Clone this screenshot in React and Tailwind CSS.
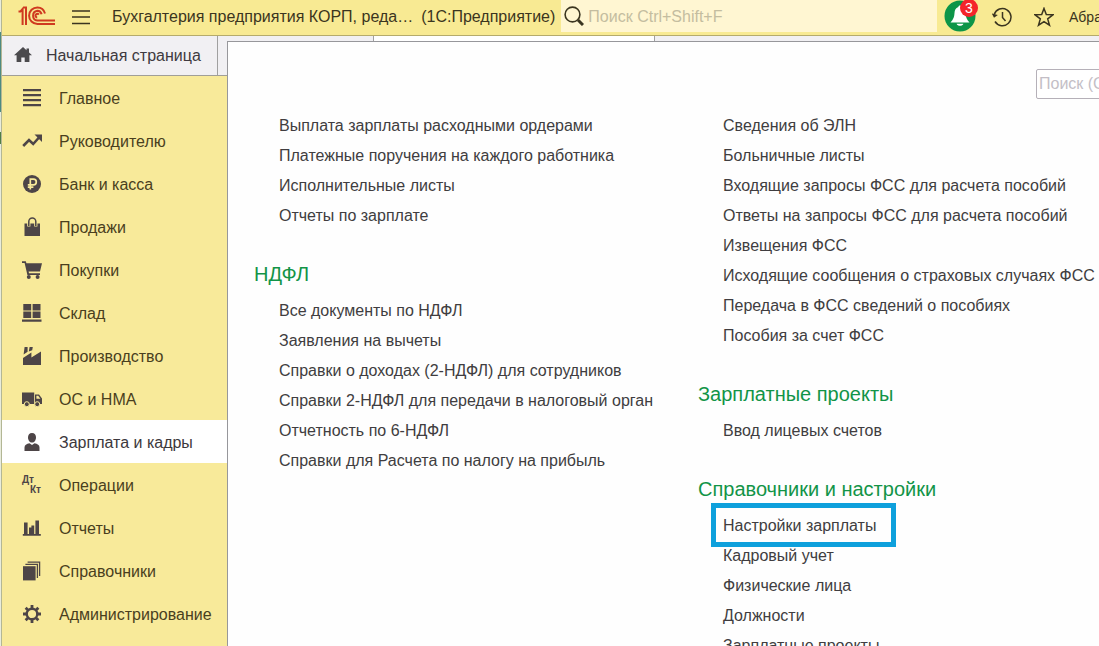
import React from 'react';

const Icon = ({ children, size = 20 }) => (
  <svg width={size} height={size} viewBox="0 0 20 20" fill="currentColor" aria-hidden="true">
    {children}
  </svg>
);

const icons = {
  main: (
    <Icon>
      <path d="M1 1h18v2.2H1zM1 6h18v2.2H1zM1 11h18v2.2H1zM1 16h18v2.2H1z" />
    </Icon>
  ),
  trend: (
    <Icon>
      <path d="M1.2 15 7 9l4.200 4L17 6.500" fill="none" stroke="currentColor" strokeWidth="2.600" />
      <path d="M12.500 3.500H20v7.500z" />
    </Icon>
  ),
  ruble: (
    <Icon>
      <circle cx="10" cy="10" r="9" />
      <path
        d="M8.300 15.500V5.200h3.200a2.700 2.700 0 0 1 0 5.600H5.800M5.800 13.200h5.600"
        fill="none"
        stroke="#f8ea9a"
        strokeWidth="1.700"
      />
    </Icon>
  ),
  bag: (
    <Icon>
      <path d="M2.500 6.500h15.500V19H2.500z" />
      <path d="M6.800 9.500V5a3.500 3.500 0 0 1 7 0v4.500" fill="none" stroke="#f8ea9a" strokeWidth="3.200" />
      <path d="M6.800 9V4.500a3.500 3.500 0 0 1 7 0V9" fill="none" stroke="currentColor" strokeWidth="1.500" />
    </Icon>
  ),
  cart: (
    <Icon>
      <path d="M0 1.200h3.800l.6 2H20l-2 8.300H6.600l.4 1.700h11v1.800H5.400L2.600 3H0z" />
      <circle cx="6.800" cy="17" r="2" />
      <circle cx="15.600" cy="17" r="2" />
    </Icon>
  ),
  stock: (
    <Icon>
      <path d="M1.300 1h7.900v6.400H1.300zM10.600 1h7.900v6.400h-7.900zM1.300 8.600h7.900V15H1.300zM10.600 8.600h7.900V15h-7.900zM0 16.400h19.500v2.400H0z" />
    </Icon>
  ),
  factory: (
    <Icon>
      <path d="M1 19V12l8.400-5.600v5L19 5.600V19z" />
      <path d="M2.600 1h3v4.800L1.600 8.600zM7.600 1h3.200l-.6 3.200-3.400 1.200z" />
    </Icon>
  ),
  truck: (
    <Icon>
      <path d="M0 3.500h12.200V15H0z" />
      <path d="M13 5.500h4l3 4V15h-7zM14.400 6.800v3h4l-2.200-3z" fillRule="evenodd" />
      <circle cx="4.800" cy="15.200" r="2.500" stroke="#f8ea9a" />
      <circle cx="15.200" cy="15.200" r="2.500" stroke="#f8ea9a" />
    </Icon>
  ),
  person: (
    <Icon>
      <path d="M10 1c2.700 0 4 2 4 4.500S12.400 10.600 10 10.600 6 8 6 5.500 7.300 1 10 1z" />
      <path d="M2.500 19v-3.600c0-2.400 2-3.600 5-4.200L10 13l2.500-1.800c3 .6 5 1.800 5 4.200V19z" />
    </Icon>
  ),
  debit: (
    <span className="relative block h-5 w-5 text-[10px] leading-[10px] font-bold">
      <span className="block text-left">Дт</span>
      <span className="block pl-2">Кт</span>
    </span>
  ),
  report: (
    <Icon>
      <path d="M2 4.500h3.600V16H2zM7 9.500h3.600V16H7zM9.400 7.500h2.800V16H9.400zM13.400 2.500H17V16h-3.600zM.8 16h18v1.800H.8z" />
    </Icon>
  ),
  books: (
    <Icon>
      <path d="M1 5.200h12.600V19.400H1z" />
      <path d="M3.400 3.400h12V17M5.600 1.200h12V15" fill="none" stroke="currentColor" strokeWidth="1.300" />
    </Icon>
  ),
  gear: (
    <Icon>
      <circle cx="10" cy="10" r="5.300" fill="none" stroke="currentColor" strokeWidth="2.400" />
      <path
        d="M10 1v3.200M10 15.800V19M1 10h3.200M15.800 10H19M3.640 3.640l2.300 2.300M14.060 14.060l2.300 2.300M3.640 16.360l2.300-2.300M14.060 5.940l2.300-2.300"
        stroke="currentColor"
        strokeWidth="2.800"
      />
    </Icon>
  ),
};

const sections = [
  { icon: 'main', label: 'Главное' },
  { icon: 'trend', label: 'Руководителю' },
  { icon: 'ruble', label: 'Банк и касса' },
  { icon: 'bag', label: 'Продажи' },
  { icon: 'cart', label: 'Покупки' },
  { icon: 'stock', label: 'Склад' },
  { icon: 'factory', label: 'Производство' },
  { icon: 'truck', label: 'ОС и НМА' },
  { icon: 'person', label: 'Зарплата и кадры', active: true },
  { icon: 'debit', label: 'Операции' },
  { icon: 'report', label: 'Отчеты' },
  { icon: 'books', label: 'Справочники' },
  { icon: 'gear', label: 'Администрирование' },
];

const leftGroups = [
  {
    items: [
      'Выплата зарплаты расходными ордерами',
      'Платежные поручения на каждого работника',
      'Исполнительные листы',
      'Отчеты по зарплате',
    ],
  },
  {
    title: 'НДФЛ',
    items: [
      'Все документы по НДФЛ',
      'Заявления на вычеты',
      'Справки о доходах (2-НДФЛ) для сотрудников',
      'Справки 2-НДФЛ для передачи в налоговый орган',
      'Отчетность по 6-НДФЛ',
      'Справки для Расчета по налогу на прибыль',
    ],
  },
];

const rightGroups = [
  {
    items: [
      'Сведения об ЭЛН',
      'Больничные листы',
      'Входящие запросы ФСС для расчета пособий',
      'Ответы на запросы ФСС для расчета пособий',
      'Извещения ФСС',
      'Исходящие сообщения о страховых случаях ФСС',
      'Передача в ФСС сведений о пособиях',
      'Пособия за счет ФСС',
    ],
  },
  { title: 'Зарплатные проекты', items: ['Ввод лицевых счетов'] },
  {
    title: 'Справочники и настройки',
    highlighted: 'Настройки зарплаты',
    items: [
      'Настройки зарплаты',
      'Кадровый учет',
      'Физические лица',
      'Должности',
      'Зарплатные проекты',
    ],
  },
];

const Logo = () => (
  <svg width="38" height="20" viewBox="0 0 38 20" fill="none" stroke="#cf3a20" strokeWidth="2" aria-label="1С">
    <path d="M.5 5.500h2L4.600 3V19M8 19V1.400H5.200" />
    <path d="M27 7.500C26 3.700 22.800 1.400 19.400 1.400a8.200 8.200 0 0 0 0 16.600H37" />
    <path d="M23.600 8.200c-.6-2.200-2.200-3.500-4.200-3.500a5 5 0 0 0 0 9.900H37" />
    <path d="M20.800 8.600a1.800 1.800 0 1 0-1.600 2.800" />
  </svg>
);

const Header = () => (
  <header className="flex h-9 shrink-0 items-center overflow-hidden border-b border-[#b5ab6c] bg-[#f8ea93] text-[#3b3520]">
    <a href="#" className="ml-4 shrink-0 pb-1">
      <Logo />
    </a>
    <button type="button" aria-label="Меню" className="ml-4 shrink-0 pb-0.5">
      <svg width="18" height="16" viewBox="0 0 18 16" stroke="currentColor" strokeWidth="1.400">
        <path d="M0 2h18M0 8h18M0 14.500h18" />
      </svg>
    </button>
    <h1 className="ml-[22px] flex shrink-0 gap-2 pb-0.5">
      <span>Бухгалтерия предприятия КОРП, реда…</span>
      <span>(1С:Предприятие)</span>
    </h1>
    <label className="ml-1.5 flex h-8 min-w-0 flex-1 items-center gap-1 self-start bg-[#fff6d2] pl-[3px]">
      <svg width="20" height="20" viewBox="0 0 20 20" fill="none" stroke="#3b3520" className="shrink-0" aria-hidden="true">
        <circle cx="8.500" cy="8.500" r="7.400" strokeWidth="1.600" />
        <path d="m14 14 5 5" strokeWidth="3" />
      </svg>
      <input
        type="search"
        placeholder="Поиск Ctrl+Shift+F"
        aria-label="Поиск"
        className="min-w-0 flex-1 bg-transparent pt-0.5 outline-none placeholder:text-[#c4bda0]"
      />
    </label>
    <button type="button" aria-label="Оповещения" className="relative ml-[7px] shrink-0 self-start">
      <svg width="32" height="32" viewBox="0 0 32 32" aria-hidden="true">
        <circle cx="16" cy="16" r="15.500" fill="#0d9548" />
        <path
          d="M16 5.500c1 0 1.600.6 1.700 1.500 2.700.8 3.600 3.200 3.800 6 .3 4 1 6.300 4 9.400h-19c3-3.100 3.700-5.400 4-9.400.2-2.800 1.100-5.200 3.800-6 .1-.9.7-1.500 1.700-1.500z"
          fill="#fff"
        />
        <path d="M12.600 23.800h6.800c-.8 2.700-6 2.700-6.800 0z" fill="#fff" />
      </svg>
      <span className="absolute -top-px -right-0.5 flex h-[18px] w-[18px] items-center justify-center rounded-full bg-[#f4252b] text-sm leading-none text-white">
        3
      </span>
    </button>
    <button type="button" aria-label="История" className="ml-4 shrink-0 pb-0.5">
      <svg width="20" height="20" viewBox="0 0 20 20" fill="none" stroke="currentColor" strokeWidth="1.500" aria-hidden="true">
        <path d="M2.200 7.500A8.600 8.600 0 1 1 3 14.500M10.500 5v5.500l3 3.400" />
        <path d="M-.2 6.500 5.800 8 2 10.800z" fill="currentColor" stroke="none" />
      </svg>
    </button>
    <button type="button" aria-label="Избранное" className="ml-[22px] shrink-0 pb-0.5">
      <svg width="20" height="20" viewBox="0 0 20 20" fill="none" stroke="currentColor" strokeWidth="1.500" aria-hidden="true">
        <path d="m10 1.400 2.300 6.100 6.600.3-5.200 4.100 1.800 6.300-5.500-3.600-5.500 3.600 1.800-6.300L1.100 7.800l6.600-.3z" />
      </svg>
    </button>
    <span className="ml-[15px] w-[30px] shrink-0 pb-0.5 text-sm whitespace-nowrap">Абра</span>
  </header>
);

const Sidebar = () => (
  <aside className="flex w-[225px] shrink-0 flex-col bg-[#f8ea9a]">
    <div className="flex h-10 shrink-0 border-b border-[#a09f98] bg-[#f1f0f3]">
      <a href="#" className="flex w-[216px] items-center gap-3 border-r border-[#a0a0a0] pl-3 text-[#3e3a40]">
        <svg width="18" height="16" viewBox="0 0 18 16" fill="#4b4a4d" className="mb-0.5" aria-hidden="true">
          <path d="M9 0 0 8.300h2.600V15h4.700v-4.600h3.400V15h4.700V8.300H18l-3-2.800V1.500h-2.500v1.700z" />
        </svg>
        <span className="pl-0.5">Начальная страница</span>
      </a>
    </div>
    <nav>
      {sections.map((section) => (
        <a
          key={section.label}
          href="#"
          className={`flex h-[43px] items-center gap-4 pt-0.5 pl-5 whitespace-nowrap ${
            section.active ? 'bg-white text-[#3c383c]' : 'text-[#4a3f1e]'
          }`}
        >
          <span className="pb-0.5 text-[#4d4547]">{icons[section.icon]}</span>
          <span className="pl-px">{section.label}</span>
        </a>
      ))}
    </nav>
  </aside>
);

const Group = ({ group }) => (
  <section>
    {group.title && (
      <h2 className="pt-7 pb-[7px] text-xl leading-[30px] text-[#129447]">{group.title}</h2>
    )}
    <ul className="pl-[25px]">
      {group.items.map((item) => (
        <li key={item} className="h-[30px] leading-[30px] whitespace-nowrap">
          <a href="#" className="relative inline-block">
            {item}
            {item === group.highlighted && (
              <span className="absolute -top-2 -right-5 -bottom-1.5 -left-3 border-5 border-[#0ea0dc]" />
            )}
          </a>
        </li>
      ))}
    </ul>
  </section>
);

const Panel = () => (
  <main className="flex min-w-0 flex-1 flex-col">
    <div className="flex h-[5px] shrink-0 bg-[#f1f0f3]">
      <div className="w-[147px] border-r border-[#a0a0a0]" />
      <div className="w-[281px] border-r border-[#a0a0a0] bg-white" />
    </div>
    <div className="flex-1 overflow-hidden border-t border-l border-[#97979b] bg-[#fefefe] text-[#403d40]">
      <div className="flex justify-end pt-[27px] pb-3">
        <input
          type="search"
          placeholder="Поиск (Ctrl+F)"
          aria-label="Поиск по разделу"
          className="-mr-[177px] h-[30px] w-60 shrink-0 rounded-xs border border-[#b5b0b8] bg-white px-0.5 outline-none placeholder:text-[#c3bec6]"
        />
      </div>
      <div className="flex pl-[26px]">
        <div className="w-[444px] shrink-0">
          {leftGroups.map((group, index) => (
            <Group key={index} group={group} />
          ))}
        </div>
        <div className="min-w-0 flex-1">
          {rightGroups.map((group, index) => (
            <Group key={index} group={group} />
          ))}
        </div>
      </div>
    </div>
  </main>
);

export default function App() {
  return (
    <div className="flex h-screen overflow-hidden bg-white font-['Liberation_Sans',Arial,sans-serif] text-base">
      <div className="flex w-0.5 shrink-0 flex-col border-r border-[#b3b795] bg-[#e9ecdc]">
        <div className="mt-8 h-20 bg-[#4d8a80]" />
        <div className="mt-5 h-3 bg-[#4f7d45]" />
      </div>
      <div className="flex min-w-0 flex-1 flex-col">
        <Header />
        <div className="flex min-h-0 flex-1">
          <Sidebar />
          <Panel />
        </div>
      </div>
    </div>
  );
}
